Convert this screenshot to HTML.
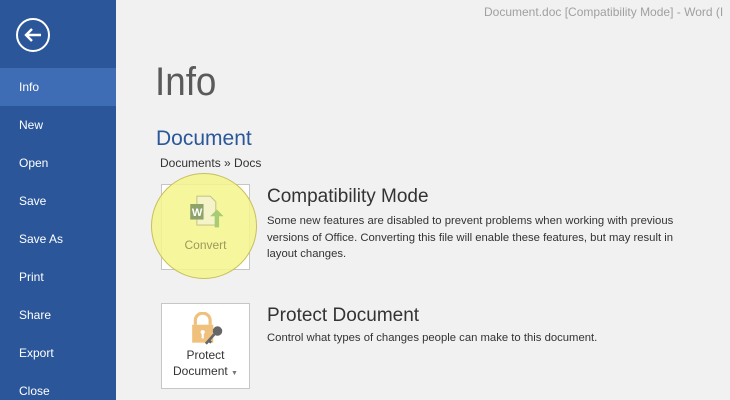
<!DOCTYPE html>
<html><head><meta charset="utf-8"><style>
html,body{margin:0;width:730px;height:400px;overflow:hidden}
body{background:#f1f1f1;font-family:"Liberation Sans",sans-serif;position:relative;color:#444}
.side{position:absolute;left:0;top:0;width:116px;height:400px;background:#2b579a}
.item{position:absolute;left:0;width:116px;height:38px;line-height:38px;color:#fff;font-size:12px;padding-left:19px;box-sizing:border-box}
.sel{background:#3e6db5}
.abs{position:absolute;white-space:nowrap}
.box{position:absolute;border:1px solid #c6c6c6;background:#fff;box-sizing:border-box}
</style></head><body>
<div class="side">
<svg class="abs" style="left:16px;top:18px" width="36" height="36" viewBox="0 0 36 36"><circle cx="17" cy="17" r="16" fill="none" stroke="#fff" stroke-width="2"/><path d="M10 17H25M16 11L10 17L16 23" fill="none" stroke="#fff" stroke-width="2.4"/></svg>
<div class="item sel" style="top:68px">Info</div>
<div class="item" style="top:106px">New</div>
<div class="item" style="top:144px">Open</div>
<div class="item" style="top:182px">Save</div>
<div class="item" style="top:220px">Save As</div>
<div class="item" style="top:258px">Print</div>
<div class="item" style="top:296px">Share</div>
<div class="item" style="top:334px">Export</div>
<div class="item" style="top:372px">Close</div>
</div>
<div class="abs" style="left:484px;top:5px;font-size:12px;color:#a0a0a0">Document.doc [Compatibility Mode] - Word (I</div>
<div class="abs" style="left:155px;top:60px;font-size:40px;color:#5a5a5a;transform:scaleX(0.92);transform-origin:left">Info</div>
<div class="abs" style="left:156px;top:127px;font-size:21px;color:#2b579a">Document</div>
<div class="abs" style="left:160px;top:156px;font-size:12px;color:#333">Documents » Docs</div>

<div class="box" style="left:161px;top:184px;width:89px;height:86px"></div>
<div class="abs" style="left:151px;top:173px;width:106px;height:106px;border-radius:50%;background:rgba(245,245,140,0.85);border:1.5px solid #c9bf5c;box-sizing:border-box"></div>
<svg class="abs" style="left:188px;top:194px" width="40" height="40" viewBox="0 0 36 36"><path d="M8 2H20L25 7V28H8Z" fill="#f5f3c8" stroke="#c9c68a"/><rect x="2" y="9" width="12" height="14" fill="#8ea36a"/><text x="3.5" y="20" font-size="10" fill="#fff" font-family="Liberation Sans" font-weight="bold">W</text><path d="M26 14L32 20H28V30H24V20H20Z" fill="#a7cc74"/></svg>
<div class="abs" style="left:161px;width:89px;text-align:center;top:238px;font-size:12px;color:#9a9a5e">Convert</div>

<div class="box" style="left:161px;top:303px;width:89px;height:86px"></div>
<svg class="abs" style="left:189px;top:312px" width="38" height="36" viewBox="0 0 36 34"><path d="M6 12V8A7 7 0 0 1 20 8V12" fill="none" stroke="#efc17d" stroke-width="3"/><rect x="3" y="12" width="20" height="17" fill="#efc17d"/><circle cx="13" cy="19" r="2" fill="#fff"/><rect x="12" y="19" width="2" height="6" fill="#fff"/><circle cx="27" cy="18" r="4.5" fill="#666"/><path d="M24 21L16 30M19 27L21 29" stroke="#666" stroke-width="2.5"/></svg>
<div class="abs" style="left:161px;width:89px;text-align:center;top:347px;font-size:12px;color:#333;line-height:16px">Protect<br>Document <span style="font-size:7px;color:#777">▼</span></div>

<div class="abs" style="left:267px;top:186px;font-size:19px;color:#333">Compatibility Mode</div>
<div class="abs" style="left:267px;top:213px;font-size:11.3px;color:#333;line-height:16.5px">Some new features are disabled to prevent problems when working with previous<br>versions of Office. Converting this file will enable these features, but may result in<br>layout changes.</div>
<div class="abs" style="left:267px;top:305px;font-size:19px;color:#333">Protect Document</div>
<div class="abs" style="left:267px;top:332px;font-size:11.3px;color:#333">Control what types of changes people can make to this document.</div>
</body></html>
